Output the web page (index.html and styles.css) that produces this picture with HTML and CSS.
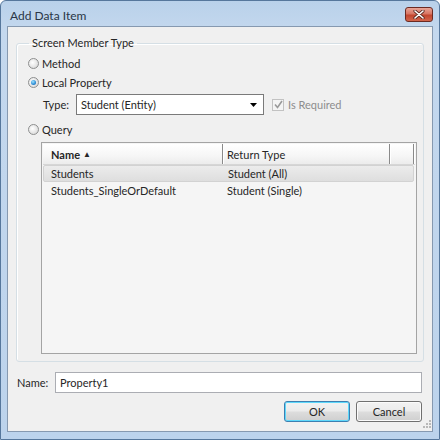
FILE: index.html
```html
<!DOCTYPE html>
<html lang="en">
<head>
    <meta charset="UTF-8">
    <title>Add Data Item</title>
    <link rel="stylesheet" href="styles.css">
</head>
<body>
    <div class="window">
        <div class="titlebar">
            <span class="title">Add Data Item</span>
            <div class="close">
                <svg width="12" height="9" viewBox="0 0 12 9">
                    <path d="M2 1 L10 8 M10 1 L2 8" stroke="#5a2a22" stroke-width="3.2" stroke-linecap="round"/>
                    <path d="M2 1 L10 8 M10 1 L2 8" stroke="#ffffff" stroke-width="1.6" stroke-linecap="round"/>
                </svg>
            </div>
        </div>

        <div class="client">
            <fieldset class="group">
                <legend>Screen Member Type</legend>

                <div class="radio-row row-method">
                    <span class="radio"></span>Method
                </div>
                <div class="radio-row row-local">
                    <span class="radio checked"></span>Local Property
                </div>

                <div class="type-row">
                    <span class="type-label">Type:</span>
                    <div class="combo">
                        <span>Student (Entity)</span>
                        <svg width="7" height="4" viewBox="0 0 7 4"><path d="M0 0 H7 L3.5 4 Z" fill="#000"/></svg>
                    </div>
                    <span class="checkbox">
                        <svg width="9" height="9" viewBox="0 0 9 9"><path d="M1 4.5 L3.5 7.5 L8 1" stroke="#9a9a9a" stroke-width="1.6" fill="none"/></svg>
                    </span>
                    <span class="disabled">Is Required</span>
                </div>

                <div class="radio-row row-query">
                    <span class="radio"></span>Query
                </div>

                <div class="grid">
                    <div class="grid-head">
                        <div class="cell col-name">Name <span class="sort">&#9650;</span></div>
                        <div class="cell col-type">Return Type</div>
                        <div class="cell col-fill"></div>
                    </div>
                    <div class="grid-row selected">
                        <div class="cell col-name">Students</div>
                        <div class="cell col-type">Student (All)</div>
                    </div>
                    <div class="grid-row">
                        <div class="cell col-name">Students_SingleOrDefault</div>
                        <div class="cell col-type">Student (Single)</div>
                    </div>
                </div>
            </fieldset>

            <div class="name-row">
                <span class="name-label">Name:</span>
                <div class="textbox">Property1</div>
            </div>

            <div class="buttons">
                <div class="btn default">OK</div>
                <div class="btn">Cancel</div>
            </div>

            <!-- size grip -->
            <svg class="grip" width="10" height="10" viewBox="0 0 10 10">
                <g fill="#b8b8b8">
                    <rect x="8" y="0" width="2" height="2"/>
                    <rect x="5" y="3" width="2" height="2"/><rect x="8" y="3" width="2" height="2"/>
                    <rect x="2" y="6" width="2" height="2"/><rect x="5" y="6" width="2" height="2"/><rect x="8" y="6" width="2" height="2"/>
                </g>
            </svg>
        </div>
    </div>
</body>
</html>
```

FILE: styles.css
```css
body {
    margin: 0;
    font-family: Lato, "Open Sans", sans-serif;
    font-size: 11px;
    color: #262626;
}
.window {
    width: 440px;
    height: 440px;
    box-sizing: border-box;
    border: 1px solid #56779c;
    border-radius: 6px 6px 0 0;
    background: linear-gradient(to bottom, #b9d1ea 0px, #c4d8ee 30px, #bcd3ec 100%);
    padding: 0 6px 7px 6px;
    display: flex;
    flex-direction: column;
}
.titlebar {
    height: 25px;
    display: flex;
    align-items: flex-start;
    justify-content: space-between;
}
.title {
    margin: 7px 0 0 3px;
    font-size: 12px;
    color: #2a3646;
}
.close {
    margin-top: 6px;
    width: 26px;
    height: 13px;
    border: 1px solid #6b2a22;
    border-radius: 3px;
    background: linear-gradient(to bottom, #e8a597 0%, #d87563 45%, #c2462f 55%, #d2654c 100%);
    display: flex;
    align-items: center;
    justify-content: center;
}
.client {
    position: relative;
    flex: 1;
    background: #f0f0f0;
    border: 1px solid #8699b0;
    padding: 8px 8px 0 8px;
}
.group {
    margin: 0;
    padding: 3px 6px 7px 10px;
    border: 1px solid #d5dfe5;
    border-radius: 3px;
    box-shadow: inset 1px 1px 0 #ffffff;
}
.group legend {
    padding: 0 3px;
    margin-left: 2px;
    line-height: 16px;
    font-size: 11px;
}
.radio-row {
    height: 18px;
    display: flex;
    align-items: center;
}
.row-local {
    margin-top: 1px;
}
.row-query {
    margin-top: 5px;
}
.radio {
    width: 11px;
    height: 11px;
    box-sizing: border-box;
    border: 1px solid #8e8f8f;
    border-radius: 50%;
    background: radial-gradient(circle at 40% 40%, #ffffff 0%, #e6e6e6 55%, #cfcfcf 100%);
    margin: 0 3px 0 1px;
    position: relative;
}
.radio.checked::after {
    content: "";
    position: absolute;
    left: 2px;
    top: 2px;
    width: 5px;
    height: 5px;
    border-radius: 50%;
    background: radial-gradient(circle at 40% 35%, #9fe4ff 0%, #2a8ad4 60%, #1b5a95 100%);
}
.type-row {
    margin: 3px 0 0 16px;
    height: 21px;
    display: flex;
    align-items: center;
}
.type-label {
    width: 33px;
}
.combo {
    width: 188px;
    height: 21px;
    box-sizing: border-box;
    border: 1px solid #7a7a7a;
    background: #ffffff;
    display: flex;
    align-items: center;
    justify-content: space-between;
    padding: 0 6px 0 4px;
}
.checkbox {
    width: 12px;
    height: 12px;
    box-sizing: border-box;
    border: 1px solid #c2c2c2;
    background: #f4f4f4;
    margin: 0 4px 0 8px;
    display: flex;
    align-items: center;
    justify-content: center;
}
.disabled {
    color: #8d8d8d;
}
.grid {
    margin: 4px 0 0 14px;
    height: 212px;
    box-sizing: border-box;
    border: 1px solid #a4a4a4;
    background: #f5f5f5;
    padding: 1px;
}
.grid-head {
    height: 20px;
    display: flex;
    background: linear-gradient(to bottom, #ffffff 0%, #f6f6f6 60%, #ececec 100%);
    border-bottom: 1px solid #d6d6d6;
    font-weight: bold;
}
.grid-head .cell {
    border-right: 1px solid #8a8a8a;
    box-shadow: 1px 0 0 #ffffff;
}
.cell {
    display: flex;
    align-items: center;
    white-space: nowrap;
    box-sizing: border-box;
}
.col-name {
    width: 180px;
    padding-left: 8px;
}
.col-type {
    width: 167px;
    padding-left: 4px;
}
.grid-head .col-type {
    font-weight: normal;
}
.col-fill {
    width: 24px;
}
.sort {
    font-size: 8px;
    margin-left: 3px;
}
.grid-row {
    height: 17px;
    display: flex;
    width: 371px;
    box-sizing: border-box;
}
.grid-row.selected {
    background: linear-gradient(to bottom, #ececec 0%, #dedede 100%);
    border: 1px solid #d2d2d2;
    border-radius: 2px;
}
.grid-row.selected .col-name {
    padding-left: 7px;
}
.name-row {
    margin: 10px 2px 0 1px;
    display: flex;
    align-items: center;
}
.name-label {
    width: 38px;
}
.textbox {
    flex: 1;
    height: 21px;
    box-sizing: border-box;
    border: 1px solid #abadb3;
    background: #ffffff;
    padding-left: 4px;
    display: flex;
    align-items: center;
}
.buttons {
    margin: 8px 2px 0 0;
    display: flex;
    justify-content: flex-end;
    gap: 6px;
}
.btn {
    width: 66px;
    height: 21px;
    box-sizing: border-box;
    border: 1px solid #707070;
    border-radius: 3px;
    background: linear-gradient(to bottom, #f2f2f2 0%, #ebebeb 48%, #dddddd 52%, #cfcfcf 100%);
    box-shadow: inset 0 0 0 1px #fbfbfb;
    display: flex;
    align-items: center;
    justify-content: center;
}
.btn.default {
    border-color: #3c7fb1;
    box-shadow: inset 0 0 0 1px #5ed8fb;
}
.grip {
    position: absolute;
    right: 1px;
    bottom: 1px;
}
```
